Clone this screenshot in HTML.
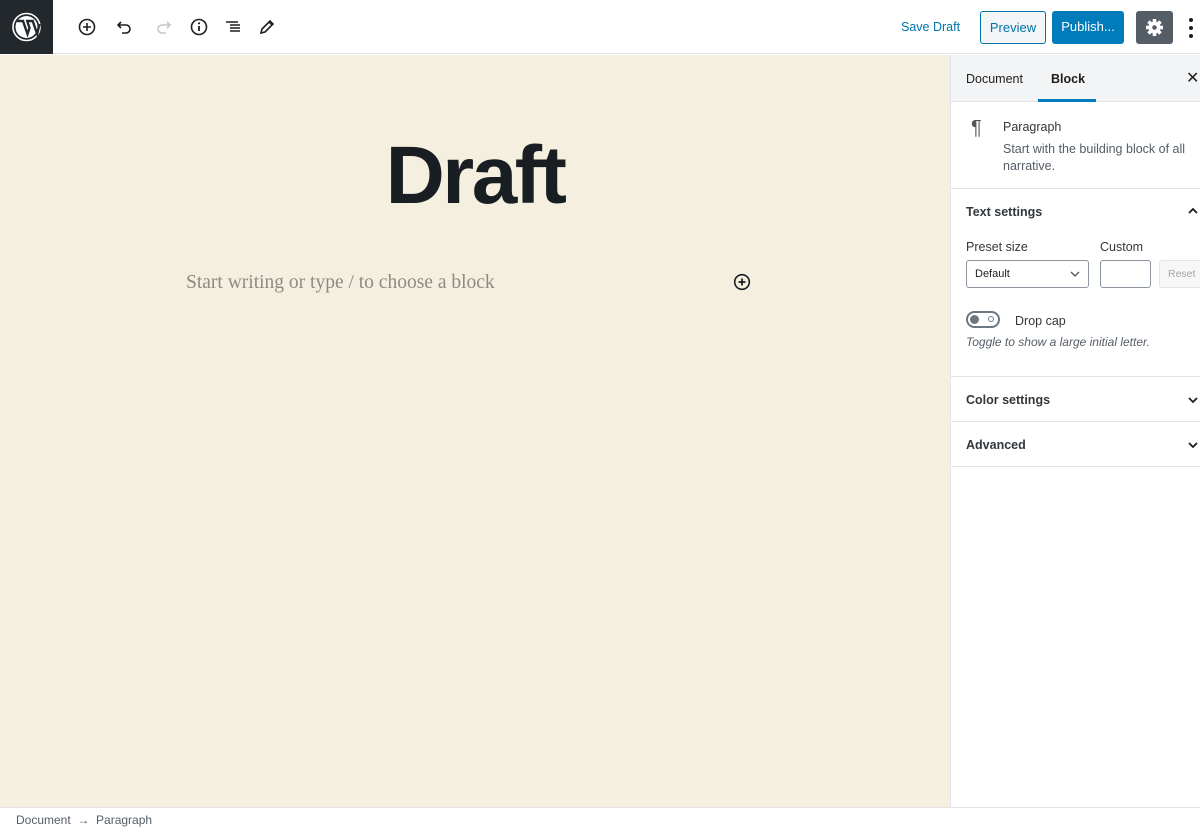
<!DOCTYPE html>
<html><head><meta charset="utf-8"><style>
*{box-sizing:border-box;margin:0;padding:0}
body{width:1200px;height:830px;overflow:hidden;font-family:"Liberation Sans",sans-serif;background:#fff;position:relative;color:#1e1e1e}
.top{position:absolute;left:0;top:0;width:1200px;height:54px;background:#fff;border-bottom:1px solid #e2e4e7}
.logo{position:absolute;left:0;top:0;width:53px;height:54px;background:#23282d}
.ic{position:absolute;top:17px}
.canvas{position:absolute;left:0;top:55px;width:950px;height:752px;background:#f5efe0}
.side{position:absolute;left:950px;top:55px;width:250px;height:752px;background:#fff;border-left:1px solid #e2e4e7}
.foot{position:absolute;left:0;top:807px;width:1200px;height:23px;background:#fff;border-top:1px solid #e2e4e7;font-size:12px;color:#555d66;padding:5px 0 0 16px}
.btn{position:absolute;top:11px;height:33px;border-radius:3px;font-size:13px;line-height:31px;text-align:center}
.t{position:absolute;font-size:12.5px;color:#32373c}
.hr{position:absolute;left:0;width:250px;height:1px;background:#e2e4e7}
</style></head><body>
<div class="top">
 <div class="logo"><svg width="53" height="54" viewBox="0 0 53 54"><circle cx="26.5" cy="27" r="13.5" fill="none" stroke="#fff" stroke-width="1.6"/><circle cx="26.5" cy="27" r="11" fill="#fff"/><path d="M17 21h6l4.5 13 2-6-2.3-7h5.5l4.5 13 2.3-10" fill="none" stroke="#23282d" stroke-width="2.4"/></svg></div>
 <svg class="ic" style="left:77px" width="20" height="20" viewBox="0 0 20 20"><circle cx="10" cy="10" r="7.5" fill="none" stroke="#1e1e1e" stroke-width="1.6"/><path d="M10 6v8M6 10h8" stroke="#1e1e1e" stroke-width="1.6"/></svg>
 <svg class="ic" style="left:115px" width="20" height="20" viewBox="0 0 20 20"><path d="M6 5L3 8l3 3M3 8h8a4 4 0 010 8H7" fill="none" stroke="#1e1e1e" stroke-width="1.6"/></svg>
 <svg class="ic" style="left:153px" width="20" height="20" viewBox="0 0 20 20"><path d="M14 5l3 3-3 3M17 8H9a4 4 0 000 8h4" fill="none" stroke="#c5c7c9" stroke-width="1.6"/></svg>
 <svg class="ic" style="left:189px" width="20" height="20" viewBox="0 0 20 20"><circle cx="10" cy="10" r="7.5" fill="none" stroke="#1e1e1e" stroke-width="1.6"/><path d="M10 9v5" stroke="#1e1e1e" stroke-width="1.8"/><circle cx="10" cy="6.3" r="1.1" fill="#1e1e1e"/></svg>
 <svg class="ic" style="left:223px" width="20" height="20" viewBox="0 0 20 20"><path d="M3 5h12M7 8h10M7 11h10M7 14h10" stroke="#1e1e1e" stroke-width="1.4"/></svg>
 <svg class="ic" style="left:257px" width="20" height="20" viewBox="0 0 20 20"><path d="M4 16l1-4 8-8 3 3-8 8z" fill="none" stroke="#1e1e1e" stroke-width="1.6"/><path d="M12 5l3 3" stroke="#1e1e1e" stroke-width="1.4"/></svg>
 <div style="position:absolute;left:901px;top:20px;font-size:12.5px;color:#0073aa">Save Draft</div>
 <div class="btn" style="left:980px;width:66px;border:1px solid #0073aa;background:#f3f5f6;color:#0073aa">Preview</div>
 <div class="btn" style="left:1052px;width:72px;background:#007cba;color:#fff">Publish...</div>
 <div class="btn" style="left:1136px;width:37px;background:#555d66"><svg width="37" height="33" viewBox="0 0 37 33"><g transform="translate(18.5 16.5)" fill="#fff"><circle r="6"/><g id="tt"><rect x="-1.8" y="-8.5" width="3.6" height="17"/></g><use href="#tt" transform="rotate(45)"/><use href="#tt" transform="rotate(90)"/><use href="#tt" transform="rotate(135)"/><circle r="2.3" fill="#555d66"/></g></svg></div>
 <svg style="position:absolute;left:1186px;top:17px" width="10" height="22"><circle cx="5" cy="3" r="2" fill="#1e1e1e"/><circle cx="5" cy="11" r="2" fill="#1e1e1e"/><circle cx="5" cy="19" r="2" fill="#1e1e1e"/></svg>
</div>
<div class="canvas">
 <div style="position:absolute;left:0;width:950px;top:80px;text-align:center;font-weight:bold;font-size:82px;letter-spacing:-2.5px;color:#191e23;line-height:1">Draft</div>
 <div style="position:absolute;left:186px;top:217px;font-family:'Liberation Serif',serif;font-size:19.5px;color:#8f8a80">Start writing or type / to choose a block</div>
 <svg style="position:absolute;left:733px;top:218px" width="18" height="18" viewBox="0 0 18 18"><circle cx="9" cy="9" r="7.3" fill="none" stroke="#191e23" stroke-width="1.6"/><path d="M9 5.5v7M5.5 9h7" stroke="#191e23" stroke-width="1.8"/></svg>
</div>
<div class="side">
 <div style="position:absolute;left:0;top:0;width:250px;height:47px;background:#f3f4f5;border-bottom:1px solid #e2e4e7"></div>
 <div class="t" style="left:15px;top:17px;color:#1e1e1e">Document</div>
 <div class="t" style="left:100px;top:17px;font-weight:bold;color:#1e1e1e">Block</div>
 <div style="position:absolute;left:87px;top:44px;width:58px;height:3px;background:#007cba"></div>
 <div style="position:absolute;left:235px;top:13px;font-size:16px;color:#1e1e1e">✕</div>
 <div style="position:absolute;left:20px;top:62px;font-size:20px;color:#555">¶</div>
 <div class="t" style="left:52px;top:65px">Paragraph</div>
 <div class="t" style="left:52px;top:86px;color:#555d66;line-height:17px;width:195px">Start with the building block of all narrative.</div>
 <div class="hr" style="top:133px"></div>
 <div class="t" style="left:15px;top:150px;font-weight:bold">Text settings</div>
 <svg style="position:absolute;left:236px;top:151px" width="12" height="10"><path d="M2 7l4-4 4 4" fill="none" stroke="#1e1e1e" stroke-width="1.8"/></svg>
 <div class="t" style="left:15px;top:185px">Preset size</div>
 <div class="t" style="left:149px;top:185px">Custom</div>
 <div style="position:absolute;left:15px;top:205px;width:123px;height:28px;border:1px solid #8d96a0;border-radius:3px;font-size:11px;padding:7px 0 0 8px">Default<svg style="position:absolute;right:8px;top:10px" width="10" height="7"><path d="M1 1l4 4 4-4" fill="none" stroke="#555" stroke-width="1.3"/></svg></div>
 <div style="position:absolute;left:149px;top:205px;width:51px;height:28px;border:1px solid #8d96a0;border-radius:3px"></div>
 <div style="position:absolute;left:208px;top:205px;width:50px;height:28px;border:1px solid #e2e4e7;background:#f7f7f7;border-radius:3px;font-size:10.5px;color:#a0a5aa;padding:7px 0 0 8px">Reset</div>
 <div style="position:absolute;left:15px;top:256px;width:34px;height:17px;border:2px solid #6c7781;border-radius:9px"><div style="position:absolute;left:2px;top:2px;width:9px;height:9px;border-radius:50%;background:#6c7781"></div><div style="position:absolute;left:20px;top:3px;width:6px;height:6px;border-radius:50%;border:1.5px solid #6c7781"></div></div>
 <div class="t" style="left:64px;top:259px">Drop cap</div>
 <div class="t" style="left:15px;top:280px;font-style:italic;color:#555d66;font-size:12px">Toggle to show a large initial letter.</div>
 <div class="hr" style="top:321px"></div>
 <div class="t" style="left:15px;top:338px;font-weight:bold">Color settings</div>
 <svg style="position:absolute;left:236px;top:340px" width="12" height="10"><path d="M2 3l4 4 4-4" fill="none" stroke="#1e1e1e" stroke-width="1.8"/></svg>
 <div class="hr" style="top:366px"></div>
 <div class="t" style="left:15px;top:383px;font-weight:bold">Advanced</div>
 <svg style="position:absolute;left:236px;top:385px" width="12" height="10"><path d="M2 3l4 4 4-4" fill="none" stroke="#1e1e1e" stroke-width="1.8"/></svg>
 <div class="hr" style="top:411px"></div>
</div>
<div class="foot">Document &nbsp;→&nbsp; Paragraph</div>
</body></html>
